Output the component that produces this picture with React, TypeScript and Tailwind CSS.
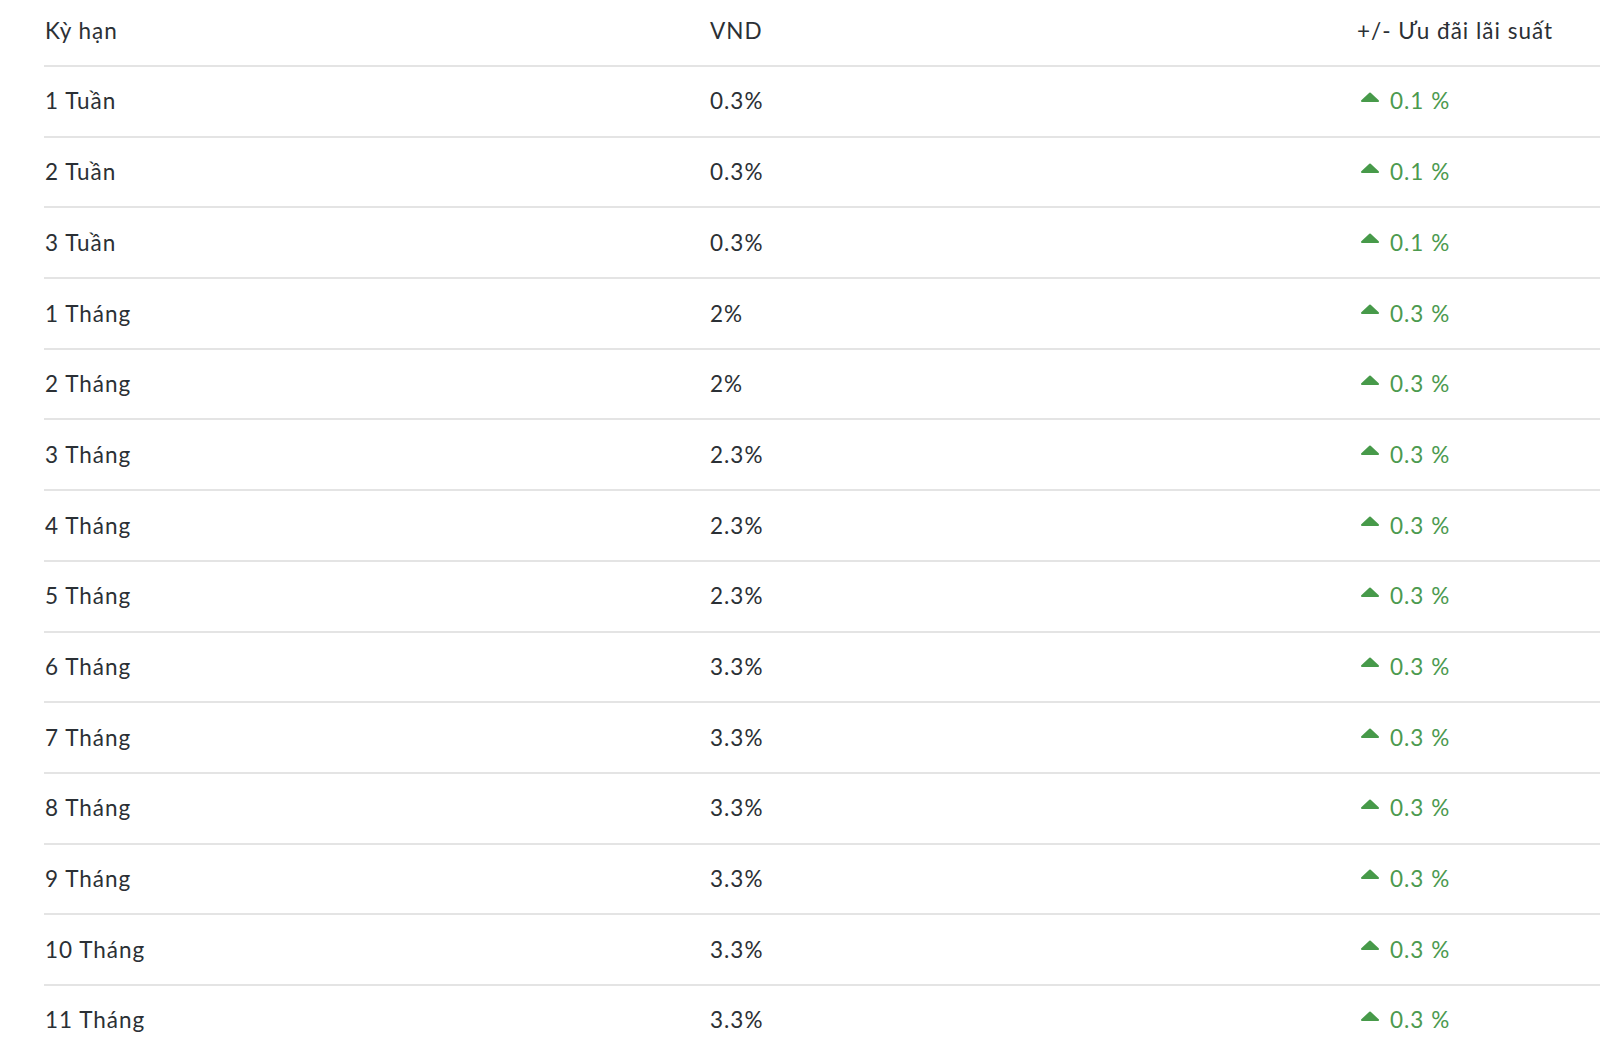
import React from "react";

const rows: [string, string, string][] = [
  ["1 Tuần", "0.3%", "0.1 %"],
  ["2 Tuần", "0.3%", "0.1 %"],
  ["3 Tuần", "0.3%", "0.1 %"],
  ["1 Tháng", "2%", "0.3 %"],
  ["2 Tháng", "2%", "0.3 %"],
  ["3 Tháng", "2.3%", "0.3 %"],
  ["4 Tháng", "2.3%", "0.3 %"],
  ["5 Tháng", "2.3%", "0.3 %"],
  ["6 Tháng", "3.3%", "0.3 %"],
  ["7 Tháng", "3.3%", "0.3 %"],
  ["8 Tháng", "3.3%", "0.3 %"],
  ["9 Tháng", "3.3%", "0.3 %"],
  ["10 Tháng", "3.3%", "0.3 %"],
  ["11 Tháng", "3.3%", "0.3 %"],
];

function Up() {
  return (
    <svg width="20" height="10" viewBox="0 0 20 10" className="shrink-0">
      <path d="M2 9 L10 1.5 L18 9 Z" fill="#479a4a" stroke="#479a4a" strokeWidth="2" strokeLinejoin="round" />
    </svg>
  );
}

export default function App() {
  return (
    <div
      className="min-h-screen bg-white pl-[44px] text-[22.5px] tracking-[1px] text-[#2b3035] overflow-hidden"
      style={{ fontFamily: "Lato, 'Noto Sans', sans-serif" }}
    >
      <div className="grid grid-cols-[666px_647px_1fr] h-[67px] items-center border-b-2 border-[#e4e4e4] pb-[4px]">
        <div className="pl-px">Kỳ hạn</div>
        <div>VND</div>
        <div>+/- Ưu đãi lãi suất</div>
      </div>
      {rows.map(([a, b, c], i) => (
        <div
          key={i}
          className="grid grid-cols-[666px_647px_1fr] h-[70.7px] items-center border-b-2 border-[#e4e4e4]"
        >
          <div className="pl-px">{a}</div>
          <div>{b}</div>
          <div className="flex items-center gap-[10px] pl-[3px] text-[#4c9a4f]">
            <span className="-mt-[9px]"><Up /></span>
            <span>{c}</span>
          </div>
        </div>
      ))}
    </div>
  );
}
